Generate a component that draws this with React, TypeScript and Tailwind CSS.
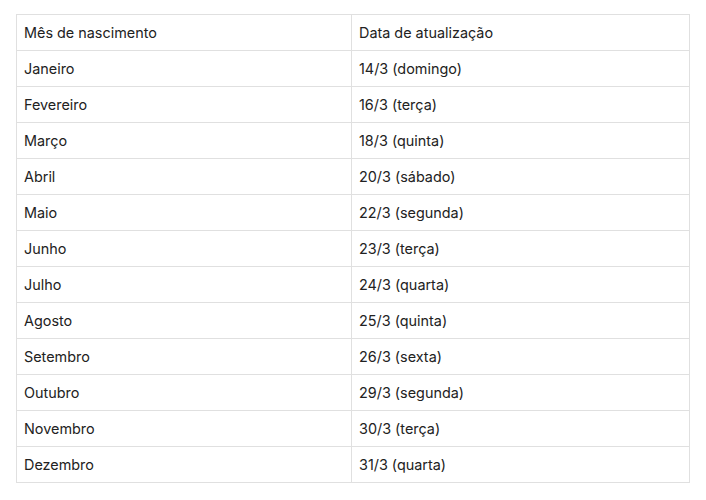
import React from "react";

const rows: [string, string][] = [
  ["Janeiro", "14/3 (domingo)"],
  ["Fevereiro", "16/3 (terça)"],
  ["Março", "18/3 (quinta)"],
  ["Abril", "20/3 (sábado)"],
  ["Maio", "22/3 (segunda)"],
  ["Junho", "23/3 (terça)"],
  ["Julho", "24/3 (quarta)"],
  ["Agosto", "25/3 (quinta)"],
  ["Setembro", "26/3 (sexta)"],
  ["Outubro", "29/3 (segunda)"],
  ["Novembro", "30/3 (terça)"],
  ["Dezembro", "31/3 (quarta)"],
];

const cell = "border border-[#e0e0e0] h-[36px] px-[7px] align-middle text-left font-normal";

export default function App() {
  return (
    <div className="w-[706px] h-[500px] bg-white pt-[14px] pl-[16px] font-['Inter',sans-serif] text-[14.4px] text-[#222]">
      <table className="w-[674px] border-collapse table-fixed">
        <thead>
          <tr>
            <th className={`${cell} w-[335px]`}>Mês de nascimento</th>
            <th className={cell}>Data de atualização</th>
          </tr>
        </thead>
        <tbody>
          {rows.map(([mes, data]) => (
            <tr key={mes}>
              <td className={cell}>{mes}</td>
              <td className={cell}>{data}</td>
            </tr>
          ))}
        </tbody>
      </table>
    </div>
  );
}
